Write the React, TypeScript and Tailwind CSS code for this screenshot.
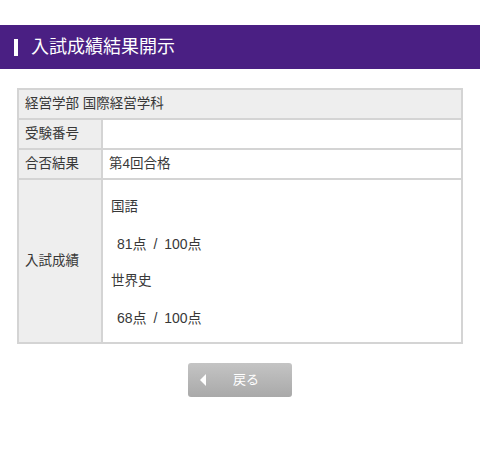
const font = { fontFamily: '"Liberation Sans", "Noto Sans CJK JP", sans-serif' };

const scores = [
  { subject: '国語', score: '81点 / 100点' },
  { subject: '世界史', score: '68点 / 100点' },
];

export default function App() {
  return (
    <div className="w-[480px] h-[450px] bg-white text-[#383838]" style={font}>
      {/* 見出し */}
      <div className="pt-[25px]">
        <div className="h-[44px] bg-[#4a1f83] flex items-center pl-[14px]">
          <span className="w-[4px] h-[17px] bg-white mr-[13px]" />
          <h1 className="text-white text-[18px] leading-none">入試成績結果開示</h1>
        </div>
      </div>

      {/* 結果テーブル */}
      <div className="px-[17px] pt-[19px]">
        <table className="w-full border-collapse text-[13.5px]">
          <tbody>
            <tr>
              <td colSpan={2} className="h-[30px] border-2 border-[#d4d4d4] bg-[#eeeeee] px-[6px]">
                経営学部 国際経営学科
              </td>
            </tr>
            <tr>
              <td className="w-[84px] h-[30px] border-2 border-[#d4d4d4] bg-[#eeeeee] px-[6px]">受験番号</td>
              <td className="border-2 border-[#d4d4d4] px-[6px]"></td>
            </tr>
            <tr>
              <td className="h-[30px] border-2 border-[#d4d4d4] bg-[#eeeeee] px-[6px]">合否結果</td>
              <td className="border-2 border-[#d4d4d4] px-[6px]">第4回合格</td>
            </tr>
            <tr>
              <td className="border-2 border-[#d4d4d4] bg-[#eeeeee] px-[6px]">入試成績</td>
              <td className="border-2 border-[#d4d4d4] px-[8px] pt-[9px] pb-[5px]">
                {scores.map((s) => (
                  <div key={s.subject}>
                    <div className="h-[37px] flex items-center">{s.subject}</div>
                    <div className="h-[37px] flex items-center pl-[6px] text-[14px] [word-spacing:3px]">{s.score}</div>
                  </div>
                ))}
              </td>
            </tr>
          </tbody>
        </table>
      </div>

      {/* 戻るボタン */}
      <div className="flex justify-center pt-[19px]">
        <button className="w-[104px] h-[34px] rounded-[3px] bg-gradient-to-b from-[#c4c4c4] to-[#a9a9a9] flex items-center text-white text-[13px] pl-[12px]">
          <span className="w-0 h-0 border-y-[6px] border-y-transparent border-r-[6px] border-r-white" />
          <span className="ml-[27px]">戻る</span>
        </button>
      </div>
    </div>
  );
}
